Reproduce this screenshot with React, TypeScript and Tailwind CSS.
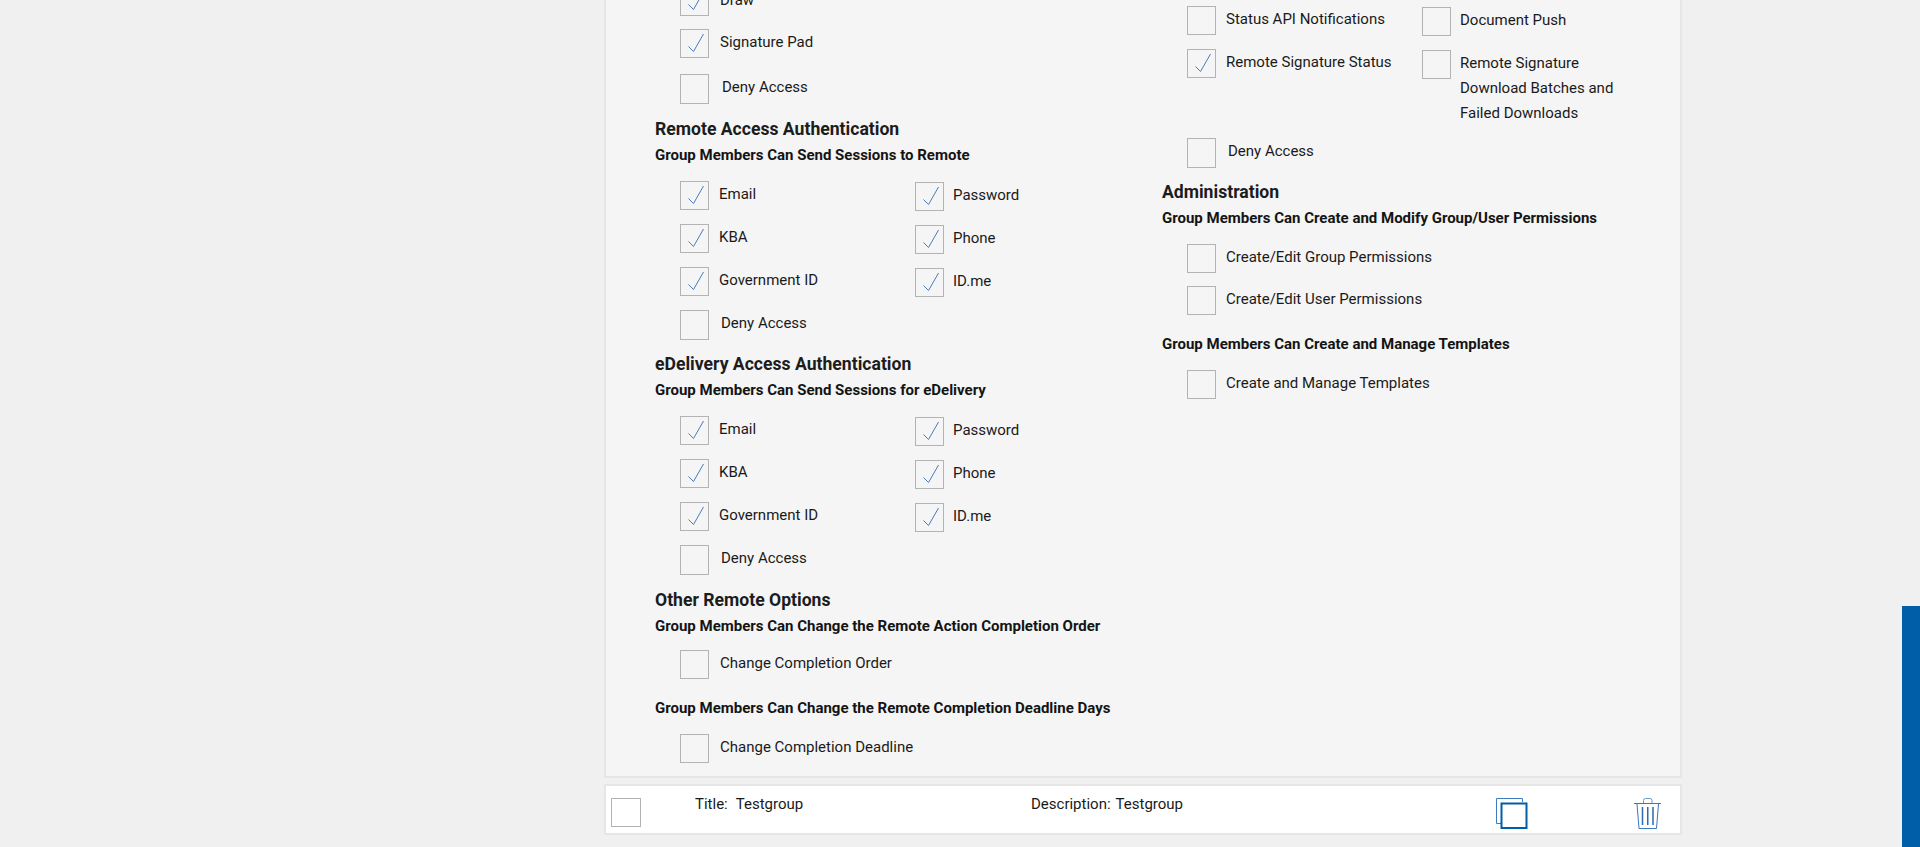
import React from "react";

function Box({ on, tall }: { on?: boolean; tall?: boolean }) {
  return (
    <span className={`block w-[29px] shrink-0 border border-[#b3b3b3] ${tall ? "h-[30px]" : "h-[29px]"}`}>
      {on && (
        <svg width="27" height="27" viewBox="0 0 27 27" className="block" fill="none">
          <path d="M7.5 16.5 L12.5 21.5 L22.5 4" stroke="#4a7cba" strokeWidth="1" />
        </svg>
      )}
    </span>
  );
}

function Item({ label, on, gap = "ml-[10px]", h = "h-[43px]" }: { label: string; on?: boolean; gap?: string; h?: string }) {
  return (
    <div className={`flex items-start ${h}`}>
      <Box on={on} />
      <span className={`${gap} pt-px leading-[25px]`}>{label}</span>
    </div>
  );
}

function Deny({ gap = "ml-[12px]", h = "h-[30px]" }: { gap?: string; h?: string }) {
  return (
    <div className={`flex items-start ${h}`}>
      <Box tall />
      <span className={`${gap} leading-[26px]`}>Deny Access</span>
    </div>
  );
}

function Heading({ title, sub, mt = "mt-[13px]" }: { title: string; sub: string; mt?: string }) {
  return (
    <div className={mt}>
      <h3 className="text-[17.6px] leading-[22px] font-bold text-[#1c1c1c]">{title}</h3>
      <p className="mt-[5px] text-[15px] leading-[20px] font-bold text-[#141414]">{sub}</p>
    </div>
  );
}

function Sub({ text, mt }: { text: string; mt: string }) {
  return <p className={`${mt} text-[15px] leading-[20px] font-bold text-[#141414]`}>{text}</p>;
}

function AuthGrid() {
  return (
    <div className="mt-[16px] pl-[25px]">
      <div className="flex">
        <div className="w-[235px]">
          <Item label="Email" on />
          <Item label="KBA" on />
          <Item label="Government ID" on />
        </div>
        <div className="-mb-px pt-px">
          <Item label="Password" on gap="ml-[9px]" />
          <Item label="Phone" on gap="ml-[9px]" />
          <Item label="ID.me" on gap="ml-[9px]" />
        </div>
      </div>
      <Deny />
    </div>
  );
}

export default function App() {
  return (
    <div className="relative h-[847px] overflow-hidden bg-[#f0f0f0] font-['Roboto',sans-serif] text-[15px] text-[#1a1a1a]">
      <div className="ml-[604px] w-[1078px]">
        <div className="flex h-[778px] border-x-2 border-b-2 border-[#e6e6e6] bg-[#f5f5f5]">
          <div className="w-[507px] pl-[49px]">
            <div className="-mt-[13px] pl-[25px]">
              <Item label="Draw" on gap="ml-[11px]" h="h-[42px]" />
              <Item label="Signature Pad" on gap="ml-[11px]" h="h-[45px]" />
              <Deny gap="ml-[13px]" />
            </div>
            <Heading title="Remote Access Authentication" sub="Group Members Can Send Sessions to Remote" mt="mt-[14px]" />
            <AuthGrid />
            <Heading title="eDelivery Access Authentication" sub="Group Members Can Send Sessions for eDelivery" />
            <AuthGrid />
            <Heading title="Other Remote Options" sub="Group Members Can Change the Remote Action Completion Order" mt="mt-[14px]" />
            <div className="mt-[14px] pl-[25px]">
              <Item label="Change Completion Order" gap="ml-[11px]" h="h-[30px]" />
            </div>
            <Sub text="Group Members Can Change the Remote Completion Deadline Days" mt="mt-[18px]" />
            <div className="mt-[16px] pl-[25px]">
              <Item label="Change Completion Deadline" gap="ml-[11px]" h="h-[29px]" />
            </div>
          </div>
          <div className="flex-1 pt-[6px] pl-[49px]">
            <div className="pl-[25px]">
              <div className="flex">
                <div className="w-[235px]">
                  <Item label="Status API Notifications" />
                  <Item label="Remote Signature Status" on h="h-[89px]" />
                </div>
                <div className="-mb-px w-[200px] pt-px">
                  <Item label="Document Push" gap="ml-[9px]" />
                  <Item label="Remote Signature Download Batches and Failed Downloads" gap="ml-[9px]" h="h-[89px]" />
                </div>
              </div>
              <Deny gap="ml-[12px]" />
            </div>
            <Heading title="Administration" sub="Group Members Can Create and Modify Group/User Permissions" />
            <div className="mt-[16px] pl-[25px]">
              <Item label="Create/Edit Group Permissions" h="h-[42px]" />
              <Item label="Create/Edit User Permissions" h="h-[29px]" />
            </div>
            <Sub text="Group Members Can Create and Manage Templates" mt="mt-[19px]" />
            <div className="mt-[16px] pl-[25px]">
              <Item label="Create and Manage Templates" h="h-[29px]" />
            </div>
          </div>
        </div>
        <div className="mt-[6px] flex h-[51px] border-2 border-[#e6e6e6] bg-white">
          <div className="ml-[5px] mt-[12px] h-[29px] w-[30px] border border-[#b3b3b3]" />
          <div className="ml-[54px] mt-[6px] flex w-[336px] leading-[25px]">
            <span>Title:</span>
            <span className="ml-[8px]">Testgroup</span>
          </div>
          <div className="mt-[6px] flex w-[421px] leading-[25px]">
            <span>Description:</span>
            <span className="ml-[5px]">Testgroup</span>
          </div>
          <svg width="34" height="34" viewBox="0 0 34 34" fill="none" className="ml-[44px] mt-[12px] shrink-0">
            <path d="M26.5 4 V.5 H.5 V25.5 H5" stroke="#3d7dbd" strokeWidth="1" />
            <rect x="5.5" y="5.5" width="25" height="24.5" stroke="#005da8" strokeWidth="2" />
          </svg>
          <svg width="30" height="34" viewBox="0 0 30 34" fill="none" className="ml-[103px] mt-[12px] shrink-0">
            <path d="M1 5.5 H28" stroke="#3b78ba" strokeWidth="1" />
            <path d="M10.5 5 V2.5 Q10.5 .5 12.5 .5 H17 Q19 .5 19 2.5 V5" stroke="#6b9bcb" strokeWidth="1" />
            <path d="M4 6 L6 30.5 H23.5 L25.5 6" stroke="#3b78ba" strokeWidth="1" />
            <path d="M9.5 9 V27 M14.75 9 V27 M20 9 V27" stroke="#2b6cb0" strokeWidth="1.5" />
          </svg>
        </div>
      </div>
      <div className="absolute right-0 bottom-0 h-[241px] w-[18px] bg-[#005ea8]" />
    </div>
  );
}
